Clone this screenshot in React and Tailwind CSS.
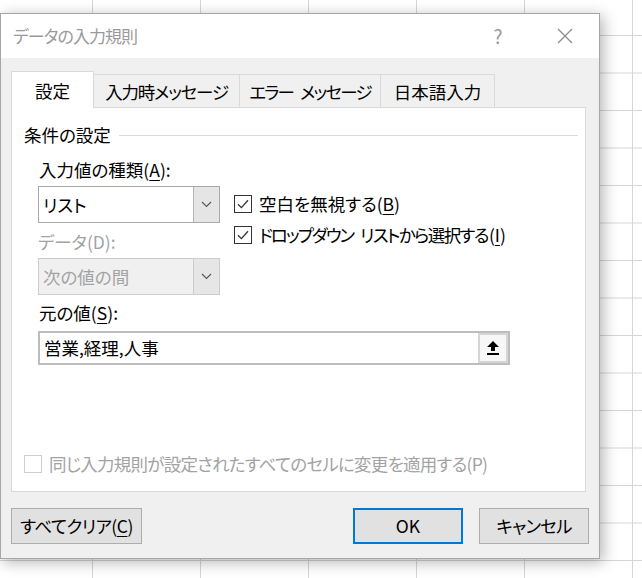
import React from "react";

function Check({ checked, disabled }) {
  return (
    <span
      className={`w-[18px] h-[18px] border bg-white flex items-center justify-center shrink-0 ${
        disabled ? "border-[#cfcfcf]" : "border-[#333333]"
      }`}
    >
      {checked && (
        <svg width="14" height="14" viewBox="0 0 14 14">
          <path d="M2 7.2 L5.4 10.6 L12 3.2" fill="none" stroke="#333333" strokeWidth="1.3" />
        </svg>
      )}
    </span>
  );
}

function Chevron() {
  return (
    <svg width="11" height="7" viewBox="0 0 11 7">
      <polyline points="1,1 5.5,5.5 10,1" fill="none" stroke="#5a5a5a" strokeWidth="1.2" />
    </svg>
  );
}

function Combo({ text, disabled }) {
  return (
    <div
      className={`flex h-[37px] w-[182px] border ${
        disabled ? "border-[#cccccc] bg-[#f0f0f0] text-[#a3a3a3]" : "border-[#a9a9a9] bg-white text-black"
      }`}
    >
      <div className="flex-1 flex items-center pl-[4px]">{text}</div>
      <div
        className={`w-[26px] border-l flex items-center justify-center ${
          disabled ? "border-[#cccccc] bg-[#e6e6e6]" : "border-[#b5b5b5] bg-[#e5e5e5]"
        }`}
      >
        <Chevron />
      </div>
    </div>
  );
}

function U({ children }) {
  return <span className="underline underline-offset-[3px] decoration-[1px]">{children}</span>;
}

export default function App() {
  return (
    <div className="w-[642px] h-[578px] overflow-hidden bg-white bg-[linear-gradient(to_right,#d6d6d6_1px,transparent_1px),linear-gradient(to_bottom,#d6d6d6_1px,transparent_1px)] bg-[size:108px_37.5px] bg-[position:92px_35px] pt-[13px] font-['Noto_Sans_CJK_JP',sans-serif] [font-feature-settings:'palt'] text-[17.5px] leading-[24px] text-black">
      <div className="w-[600px] h-[546px] border border-[#a6a6a6] bg-[#f0f0f0] shadow-[3px_3px_14px_rgba(0,0,0,0.3)] flex flex-col">
        {/* title bar */}
        <div className="h-[44px] bg-white flex items-center pl-[12px] pr-[11px] shrink-0">
          <div className="flex-1 text-[#9a9a9a] text-[17px] tracking-[-1px]">データの入力規則</div>
          <div className="w-[40px] text-center text-[#999999] text-[19px]">?</div>
          <div className="w-[24px]" />
          <div className="w-[46px] flex items-center justify-center">
            <svg width="16" height="16" viewBox="0 0 16 16">
              <path d="M1 1 L15 15 M15 1 L1 15" stroke="#8c8c8c" strokeWidth="1.3" />
            </svg>
          </div>
        </div>

        {/* body */}
        <div className="flex-1 flex flex-col px-[10px] pt-[13px]">
          {/* tabs */}
          <div className="flex items-end h-[37px] -mb-px">
            <div className="relative z-10 w-[83px] h-[37px] bg-white border border-b-0 border-[#d9d9d9] flex items-center justify-center pt-[1px]">
              設定
            </div>
            <div className="w-[146px] h-[33px] mb-[1px] border-t border-r border-[#d9d9d9] flex items-center justify-center pt-[1px] tracking-[-1.2px]">
              入力時メッセージ
            </div>
            <div className="w-[141px] h-[33px] mb-[1px] border-t border-r border-[#d9d9d9] flex items-center justify-center pt-[1px]">
              <span className="tracking-[-1.8px]">エラー</span>
              <span className="w-[7px]"> </span>
              <span className="tracking-[-1.8px]">メッセージ</span>
            </div>
            <div className="w-[114px] h-[33px] mb-[1px] border-t border-r border-[#d9d9d9] flex items-center justify-center pt-[1px]">
              日本語入力
            </div>
          </div>

          {/* panel */}
          <div className="w-[575px] h-[385px] border border-[#d9d9d9] bg-white flex flex-col pt-[15px]">
            <div className="flex items-center h-[24px] pl-[12px] pr-[7px]">
              <span>条件の設定</span>
              <div className="flex-1 h-px bg-[#dcdcdc] ml-[8px]" />
            </div>

            <div className="flex pl-[26px] mt-[11px]">
              <div className="flex flex-col w-[182px]">
                <div className="h-[24px] pl-[1px]">
                  入力値の種類(<U>A</U>):
                </div>
                <div className="mt-[4px]">
                  <Combo text="リスト" />
                </div>
                <div className="h-[24px] mt-[7px] text-[#a3a3a3]">データ(D):</div>
                <div className="mt-[4px]">
                  <Combo text="次の値の間" disabled />
                </div>
              </div>
              <div className="flex flex-col ml-[14px] pt-[34px] gap-[7px]">
                <div className="flex items-center h-[24px] gap-[7px]">
                  <Check checked />
                  <span>
                    空白を無視する(<U>B</U>)
                  </span>
                </div>
                <div className="flex items-center h-[24px] gap-[7px]">
                  <Check checked />
                  <span className="flex">
                    <span className="tracking-[-2px]">ドロップダウン</span>
                    <span className="w-[7px]"> </span>
                    <span className="tracking-[-1.6px]">リストから選択する</span>
                    <span className="ml-[1px]">
                      (<U>I</U>)
                    </span>
                  </span>
                </div>
              </div>
            </div>

            <div className="pl-[27px] mt-[6px] h-[24px]">
              元の値(<U>S</U>):
            </div>
            <div className="ml-[26px] mt-[6px] w-[472px] h-[34px] border-2 border-[#bdbdbd] flex">
              <div className="flex-1 flex items-center pl-[4px]">営業,経理,人事</div>
              <div className="w-[30px] border-2 border-[#d6d6d6] bg-[#f7f7f7] flex items-center justify-center">
                <svg width="14" height="16" viewBox="0 0 14 16">
                  <polygon points="7,1 13,7 9,7 9,11 5,11 5,7 1,7" fill="#000000" />
                  <rect x="1" y="13" width="12" height="2" fill="#000000" />
                </svg>
              </div>
            </div>

            <div className="flex-1" />

            <div className="flex items-center h-[24px] pl-[12px] mb-[15px] gap-[7px] text-[#a3a3a3]">
              <Check disabled />
              <span className="tracking-[-0.75px]">同じ入力規則が設定されたすべてのセルに変更を適用する(P)</span>
            </div>
          </div>

          {/* buttons */}
          <div className="flex mt-[16px] h-[36px]">
            <div className="w-[131px] h-[36px] bg-[#e1e1e1] border border-[#adadad] flex items-center justify-center tracking-[-0.5px]">
              すべてクリア(<U>C</U>)
            </div>
            <div className="flex-1" />
            <div className="w-[110px] h-[36px] bg-[#e1e1e1] border-2 border-[#0078d7] flex items-center justify-center">
              OK
            </div>
            <div className="w-[16px]" />
            <div className="w-[110px] h-[36px] bg-[#e1e1e1] border border-[#adadad] flex items-center justify-center tracking-[-0.8px]">
              キャンセル
            </div>
          </div>
        </div>
      </div>
    </div>
  );
}
